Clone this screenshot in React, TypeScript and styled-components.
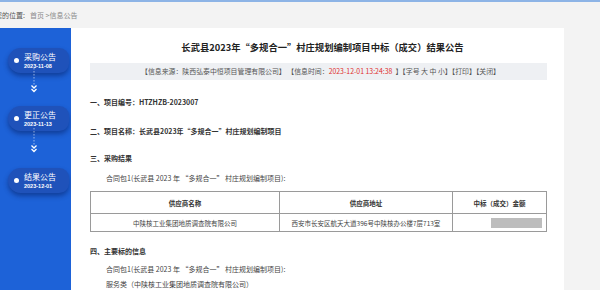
import styled, { createGlobalStyle } from "styled-components";

const GlobalStyle = createGlobalStyle`
  html, body {
    margin: 0;
    padding: 0;
    background: #f3f3f3;
    font-family: "Noto Sans CJK SC", "Noto Sans", sans-serif;
    overflow: hidden;
  }
`;

const steps = [
  { title: "采购公告", date: "2023-11-08" },
  { title: "更正公告", date: "2023-11-13" },
  { title: "结果公告", date: "2023-12-01" },
];

function Arrow() {
  return (
    <svg width="10" height="30" viewBox="0 0 10 30">
      <line x1="5" y1="0" x2="5" y2="17" stroke="rgba(255,255,255,0.55)" strokeWidth="1" strokeDasharray="1.5 1.5" />
      <path d="M2.5 17.5 L5 20 L7.5 17.5" fill="none" stroke="#fff" strokeWidth="1.3" />
      <path d="M2.5 21 L5 23.5 L7.5 21" fill="none" stroke="#fff" strokeWidth="1.3" />
    </svg>
  );
}

function App() {
  return (
    <Page>
      <GlobalStyle />
      <Crumbs>
        <CrumbLabel>您的位置:</CrumbLabel>
        <CrumbLink>首页 &gt;信息公告</CrumbLink>
      </Crumbs>
      <Main>
        <Sidebar>
          {steps.map((s, i) => (
            <Step key={s.title}>
              {i > 0 && <ArrowBox $tall={i === 2}><Arrow /></ArrowBox>}
              <Pill>
                <Dot />
                <PillText>
                  <PillTitle>{s.title}</PillTitle>
                  <PillDate>{s.date}</PillDate>
                </PillText>
              </Pill>
            </Step>
          ))}
        </Sidebar>
        <Content>
          <Title>长武县2023年“多规合一”村庄规划编制项目中标（成交）结果公告</Title>
          <InfoBar>
            【信息来源：陕西弘泰中恒项目管理有限公司】 【信息时间：<Red>2023-12-01 13:24:38</Red> &nbsp;】【字号 大 中 小】【打印】【关闭】
          </InfoBar>
          <Heading $top={16}>一、项目编号：HTZHZB-2023007</Heading>
          <Heading $top={17}>二、项目名称：长武县2023年“多规合一”村庄规划编制项目</Heading>
          <Heading $top={15}>三、采购结果</Heading>
          <Para $top={8}>合同包1(长武县 2023 年 “多规合一” 村庄规划编制项目):</Para>
          <Table>
            <colgroup>
              <col style={{ width: 189 }} />
              <col style={{ width: 173 }} />
              <col />
            </colgroup>
            <thead>
              <tr>
                <Th>供应商名称</Th>
                <Th>供应商地址</Th>
                <Th>中标（成交）金额</Th>
              </tr>
            </thead>
            <tbody>
              <tr>
                <Td>中陕核工业集团地质调查院有限公司</Td>
                <Td>西安市长安区航天大道396号中陕核办公楼7层713室</Td>
                <Td $right>
                  <Masked />
                </Td>
              </tr>
            </tbody>
          </Table>
          <Heading $top={13}>四、主要标的信息</Heading>
          <Para $top={6}>合同包1(长武县 2023 年 “多规合一” 村庄规划编制项目):</Para>
          <Para $top={3}>服务类（中陕核工业集团地质调查院有限公司）</Para>
        </Content>
      </Main>
    </Page>
  );
}

export default App;

const Page = styled.div`
  width: 600px;
  height: 290px;
  border-top: 2px solid #8db4e6;
  box-sizing: border-box;
  overflow: hidden;
`;

const Crumbs = styled.div`
  height: 26px;
  display: flex;
  align-items: center;
  gap: 5px;
  margin-left: -5px;
  font-size: 7px;
`;

const CrumbLabel = styled.span`
  color: #555;
`;

const CrumbLink = styled.span`
  color: #8a8a8a;
`;

const Main = styled.div`
  display: flex;
  align-items: stretch;
  height: 262px;
`;

const Sidebar = styled.div`
  width: 71px;
  flex-shrink: 0;
  background: #1d62d8;
  padding-top: 20px;
  box-sizing: border-box;
  display: flex;
  flex-direction: column;
`;

const Step = styled.div`
  display: flex;
  flex-direction: column;
`;

const ArrowBox = styled.div<{ $tall?: boolean }>`
  height: ${(p) => (p.$tall ? 37 : 33)}px;
  display: flex;
  justify-content: flex-start;
  padding-left: 29px;
  align-items: flex-end;
  padding-bottom: ${(p) => (p.$tall ? 10 : 8)}px;
  box-sizing: border-box;
`;

const Pill = styled.div`
  margin-left: 8px;
  width: 61px;
  height: 25px;
  border-radius: 13px 10px 10px 13px;
  background: #1f52ba;
  box-shadow: 0 3px 5px rgba(0, 20, 80, 0.45);
  display: flex;
  align-items: center;
  box-sizing: border-box;
  padding-left: 6px;
  gap: 5px;
`;

const Dot = styled.span`
  width: 5px;
  height: 5px;
  border-radius: 50%;
  background: #fff;
  flex-shrink: 0;
`;

const PillText = styled.div`
  display: flex;
  flex-direction: column;
  color: #fff;
`;

const PillTitle = styled.span`
  font-size: 8px;
  line-height: 10px;
`;

const PillDate = styled.span`
  font-size: 5.5px;
  line-height: 8px;
  font-weight: 700;
  font-family: "Liberation Sans", sans-serif;
`;

const Content = styled.div`
  width: 493px;
  background: #fff;
  padding: 12px 17px 0 19px;
  box-sizing: border-box;
`;

const Title = styled.div`
  text-align: center;
  font-size: 9.3px;
  line-height: 14px;
  font-weight: 700;
  color: #222;
  padding-left: 8px;
`;

const InfoBar = styled.div`
  margin-top: 9px;
  height: 17px;
  line-height: 17px;
  background: #eef0f3;
  text-align: center;
  font-size: 6.9px;
  color: #555;
  white-space: nowrap;
  padding-left: 4px;
`;

const Red = styled.span`
  color: #e0312f;
`;

const Heading = styled.div<{ $top: number }>`
  margin-top: ${(p) => p.$top}px;
  line-height: 12px;
  font-size: 7px;
  font-weight: 700;
  color: #333;
`;

const Para = styled.div<{ $top: number }>`
  margin-top: ${(p) => p.$top}px;
  padding-left: 16px;
  line-height: 12px;
  font-size: 7px;
  color: #444;
`;

const Table = styled.table`
  margin-top: 7px;
  width: 457px;
  border-collapse: collapse;
  table-layout: fixed;
  border: 1px solid #9a9a9a;
`;

const Th = styled.th`
  height: 21px;
  border: 1px solid #9a9a9a;
  font-size: 6.5px;
  font-weight: 700;
  color: #333;
  padding: 0;
`;

const Td = styled.td<{ $right?: boolean }>`
  height: 17px;
  border: 1px solid #9a9a9a;
  font-size: 6.5px;
  color: #444;
  text-align: ${(p) => (p.$right ? "right" : "center")};
  padding: 0 ${(p) => (p.$right ? 4 : 0)}px 0 0;
`;

const Masked = styled.span`
  display: inline-block;
  vertical-align: middle;
  width: 51px;
  height: 10px;
  background: #bdbdbd;
`;
